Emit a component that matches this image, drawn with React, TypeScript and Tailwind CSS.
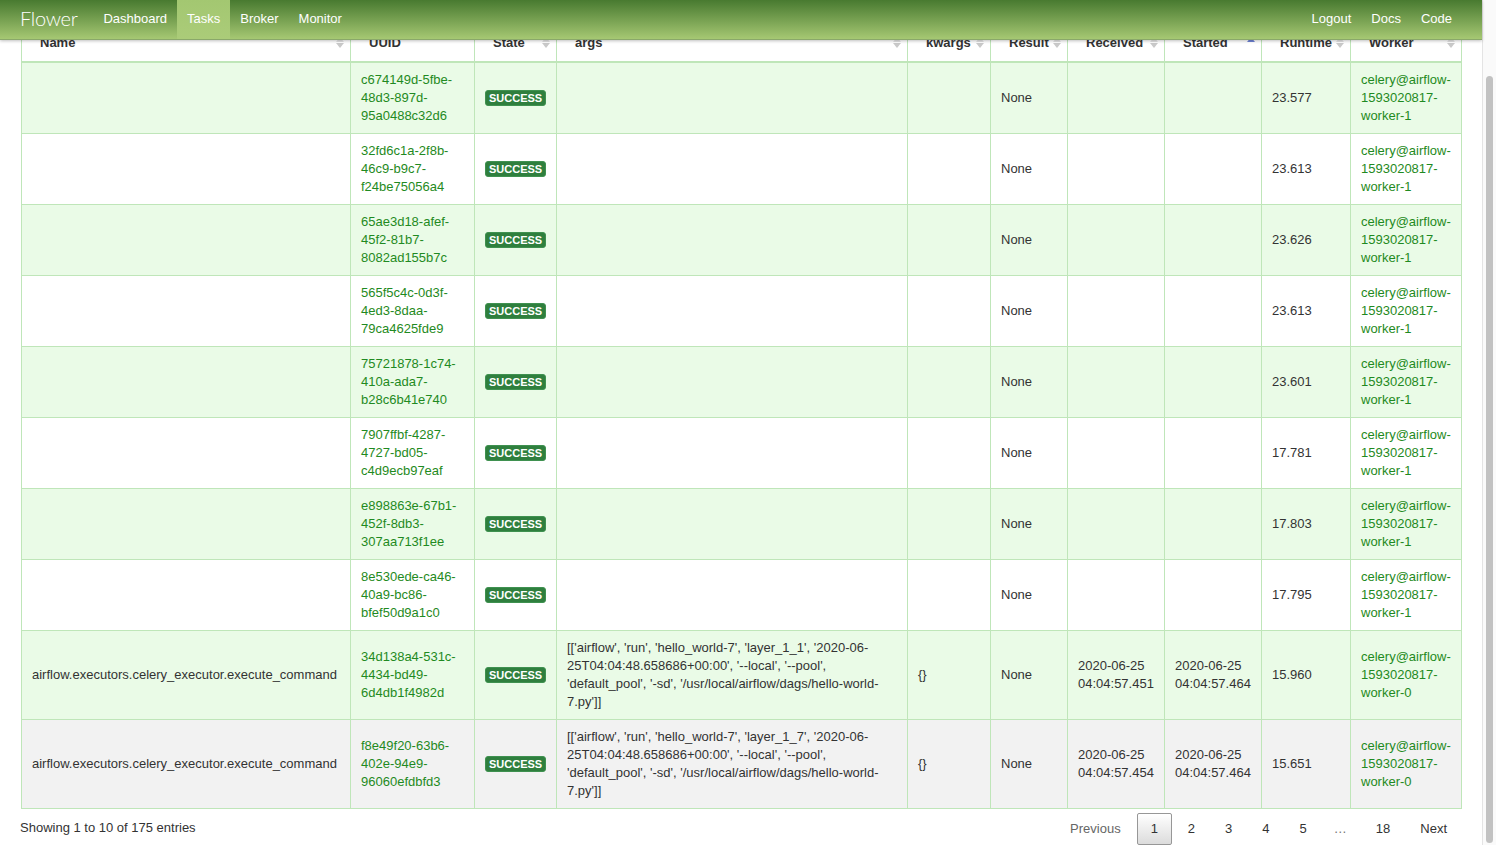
import React from "react";

type Task = {
  name: string;
  uuid: string;
  args: string[];
  kwargs: string;
  result: string;
  received: string;
  started: string;
  runtime: string;
  worker: string;
};

const ARGS_1 = [
  "[['airflow', 'run', 'hello_world-7', 'layer_1_1', '2020-06-",
  "25T04:04:48.658686+00:00', '--local', '--pool',",
  "'default_pool', '-sd', '/usr/local/airflow/dags/hello-world-",
  "7.py']]",
];

const ARGS_7 = [
  "[['airflow', 'run', 'hello_world-7', 'layer_1_7', '2020-06-",
  "25T04:04:48.658686+00:00', '--local', '--pool',",
  "'default_pool', '-sd', '/usr/local/airflow/dags/hello-world-",
  "7.py']]",
];

const blank = (uuid: string, runtime: string): Task => ({
  name: "",
  uuid,
  args: [],
  kwargs: "",
  result: "None",
  received: "",
  started: "",
  runtime,
  worker: "celery@airflow-1593020817-worker-1",
});

const TASKS: Task[] = [
  blank("c674149d-5fbe-48d3-897d-95a0488c32d6", "23.577"),
  blank("32fd6c1a-2f8b-46c9-b9c7-f24be75056a4", "23.613"),
  blank("65ae3d18-afef-45f2-81b7-8082ad155b7c", "23.626"),
  blank("565f5c4c-0d3f-4ed3-8daa-79ca4625fde9", "23.613"),
  blank("75721878-1c74-410a-ada7-b28c6b41e740", "23.601"),
  blank("7907ffbf-4287-4727-bd05-c4d9ecb97eaf", "17.781"),
  blank("e898863e-67b1-452f-8db3-307aa713f1ee", "17.803"),
  blank("8e530ede-ca46-40a9-bc86-bfef50d9a1c0", "17.795"),
  {
    name: "airflow.executors.celery_executor.execute_command",
    uuid: "34d138a4-531c-4434-bd49-6d4db1f4982d",
    args: ARGS_1,
    kwargs: "{}",
    result: "None",
    received: "2020-06-25 04:04:57.451",
    started: "2020-06-25 04:04:57.464",
    runtime: "15.960",
    worker: "celery@airflow-1593020817-worker-0",
  },
  {
    name: "airflow.executors.celery_executor.execute_command",
    uuid: "f8e49f20-63b6-402e-94e9-96060efdbfd3",
    args: ARGS_7,
    kwargs: "{}",
    result: "None",
    received: "2020-06-25 04:04:57.454",
    started: "2020-06-25 04:04:57.464",
    runtime: "15.651",
    worker: "celery@airflow-1593020817-worker-0",
  },
];

type SortState = "both" | "asc" | "none";

const COLUMNS: Array<{ label: string; width: string; sort: SortState }> = [
  { label: "Name", width: "w-[329px]", sort: "both" },
  { label: "UUID", width: "w-[124px]", sort: "none" },
  { label: "State", width: "w-[82px]", sort: "both" },
  { label: "args", width: "w-[351px]", sort: "both" },
  { label: "kwargs", width: "w-[83px]", sort: "both" },
  { label: "Result", width: "w-[77px]", sort: "both" },
  { label: "Received", width: "w-[97px]", sort: "both" },
  { label: "Started", width: "w-[97px]", sort: "asc" },
  { label: "Runtime", width: "w-[89px]", sort: "both" },
  { label: "Worker", width: "w-[111px]", sort: "both" },
];

// uuids and worker names wrap after their hyphens
const uuidLines = (uuid: string) => {
  const p = uuid.split("-");
  return [`${p[0]}-${p[1]}-`, `${p[2]}-${p[3]}-`, p[4]];
};

const workerLines = (worker: string) => {
  const p = worker.split("-");
  return [`${p[0]}-`, `${p[1]}-`, `${p[2]}-${p[3]}`];
};

function Lines({ lines }: { lines: string[] }) {
  return (
    <>
      {lines.map((l, i) => (
        <span key={i} className="block whitespace-nowrap">
          {l}
        </span>
      ))}
    </>
  );
}

function SortIcon({ sort }: { sort: SortState }) {
  if (sort === "none") return null;
  return (
    <svg
      className="absolute right-[6px] top-[8px]"
      width="8"
      height="16"
      viewBox="0 0 8 16"
    >
      <polygon points="0,9 4,4 8,9" fill={sort === "asc" ? "#6d80d2" : "#e2e2e2"} />
      {sort === "both" && <polygon points="0,10 8,10 4,15" fill="#c9c9c9" />}
    </svg>
  );
}

const NAV_LEFT = ["Dashboard", "Tasks", "Broker", "Monitor"];
const NAV_RIGHT = ["Logout", "Docs", "Code"];
const PAGES = ["1", "2", "3", "4", "5", "…", "18"];

export default function App() {
  const cell = "border border-[#bfe6b9] px-[10px] py-[8px] align-middle";

  return (
    <div className="flex h-[845px] w-full overflow-hidden bg-white font-['Liberation_Sans',Arial,sans-serif] text-[13px] leading-[18px] text-[#333]">
      <div className="relative min-w-0 flex-1">
        {/* Fixed navbar, sits over the scrolled table header */}
        <nav className="absolute inset-x-0 top-0 z-10 flex h-[40px] items-stretch border-b border-[#8aa86a] bg-linear-to-b from-[#487a30] to-[#a6c873] pr-[20px] text-white shadow-[0_1px_3px_rgba(0,0,0,0.25)]">
          <span className="flex items-center pb-[3px] pl-[20px] pr-[16px] font-['Lato',sans-serif] text-[20px] font-light tracking-[-0.3px]">
            Flower
          </span>
          {NAV_LEFT.map((item) => (
            <a
              key={item}
              className={
                "flex items-center px-[10px] pb-[2px] " +
                (item === "Tasks" ? "bg-linear-to-b from-[#a3c771] to-[#abcc79]" : "")
              }
            >
              {item}
            </a>
          ))}
          <div className="flex-1" />
          {NAV_RIGHT.map((item) => (
            <a key={item} className="flex items-center px-[10px] pb-[2px]">
              {item}
            </a>
          ))}
        </nav>

        <main className="px-[20px] pt-[25px]">
          <table className="ml-[1px] w-[1440px] table-fixed border-collapse">
            <colgroup>
              {COLUMNS.map((c) => (
                <col key={c.label} className={c.width} />
              ))}
            </colgroup>
            <thead>
              <tr className="border-b-2 border-[#bfe6b9]">
                {COLUMNS.map((c) => (
                  <th
                    key={c.label}
                    className="relative border-x border-[#bfe6b9] bg-white py-[9px] pl-[18px] pr-[18px] text-left font-bold"
                  >
                    {c.label}
                    <SortIcon sort={c.sort} />
                  </th>
                ))}
              </tr>
            </thead>
            <tbody>
              {TASKS.map((t, i) => {
                const bg =
                  i === TASKS.length - 1 ? "bg-[#f2f2f2]" : i % 2 === 0 ? "bg-[#eafbe7]" : "bg-white";
                return (
                  <tr key={t.uuid} className={bg}>
                    <td className={cell + " whitespace-nowrap"}>{t.name}</td>
                    <td className={cell + " text-[#1f8a22]"}>
                      <Lines lines={uuidLines(t.uuid)} />
                    </td>
                    <td className={cell}>
                      <span className="inline-block rounded-[3px] border border-[#3f9150] bg-[#2f7f3e] px-[3px] text-[11px] font-bold leading-[14px] text-white">
                        SUCCESS
                      </span>
                    </td>
                    <td className={cell}>
                      <Lines lines={t.args} />
                    </td>
                    <td className={cell}>{t.kwargs}</td>
                    <td className={cell}>{t.result}</td>
                    <td className={cell}>{t.received}</td>
                    <td className={cell}>{t.started}</td>
                    <td className={cell}>{t.runtime}</td>
                    <td className={cell + " text-[#1f8a22]"}>
                      <Lines lines={workerLines(t.worker)} />
                    </td>
                  </tr>
                );
              })}
            </tbody>
          </table>

          <div className="flex w-[1441px] items-start justify-between">
            <div className="pt-[10px]">Showing 1 to 10 of 175 entries</div>
            <div className="flex pt-[4px]">
              <span className="ml-[2px] border border-transparent px-[13px] py-[6px] text-[#666]">
                Previous
              </span>
              {PAGES.map((p) =>
                p === "1" ? (
                  <span
                    key={p}
                    className="ml-[2px] min-w-[35px] rounded-[2px] border border-[#979797] bg-linear-to-b from-white to-[#dcdcdc] px-[13px] py-[6px] text-center"
                  >
                    {p}
                  </span>
                ) : p === "…" ? (
                  <span key={p} className="px-[13px] py-[7px] text-[#777]">
                    {p}
                  </span>
                ) : (
                  <span
                    key={p}
                    className="ml-[2px] min-w-[35px] border border-transparent px-[13px] py-[6px] text-center"
                  >
                    {p}
                  </span>
                )
              )}
              <span className="ml-[2px] border border-transparent px-[13px] py-[6px]">Next</span>
            </div>
          </div>
        </main>
      </div>

      {/* page scrollbar */}
      <div className="flex w-[14px] shrink-0 flex-col border-l border-[#e4e4e4] bg-[#fafafa] px-[3px] pb-[2px] pt-[76px]">
        <div className="flex-1 rounded-full bg-[#c2c2c2]" />
      </div>
    </div>
  );
}
